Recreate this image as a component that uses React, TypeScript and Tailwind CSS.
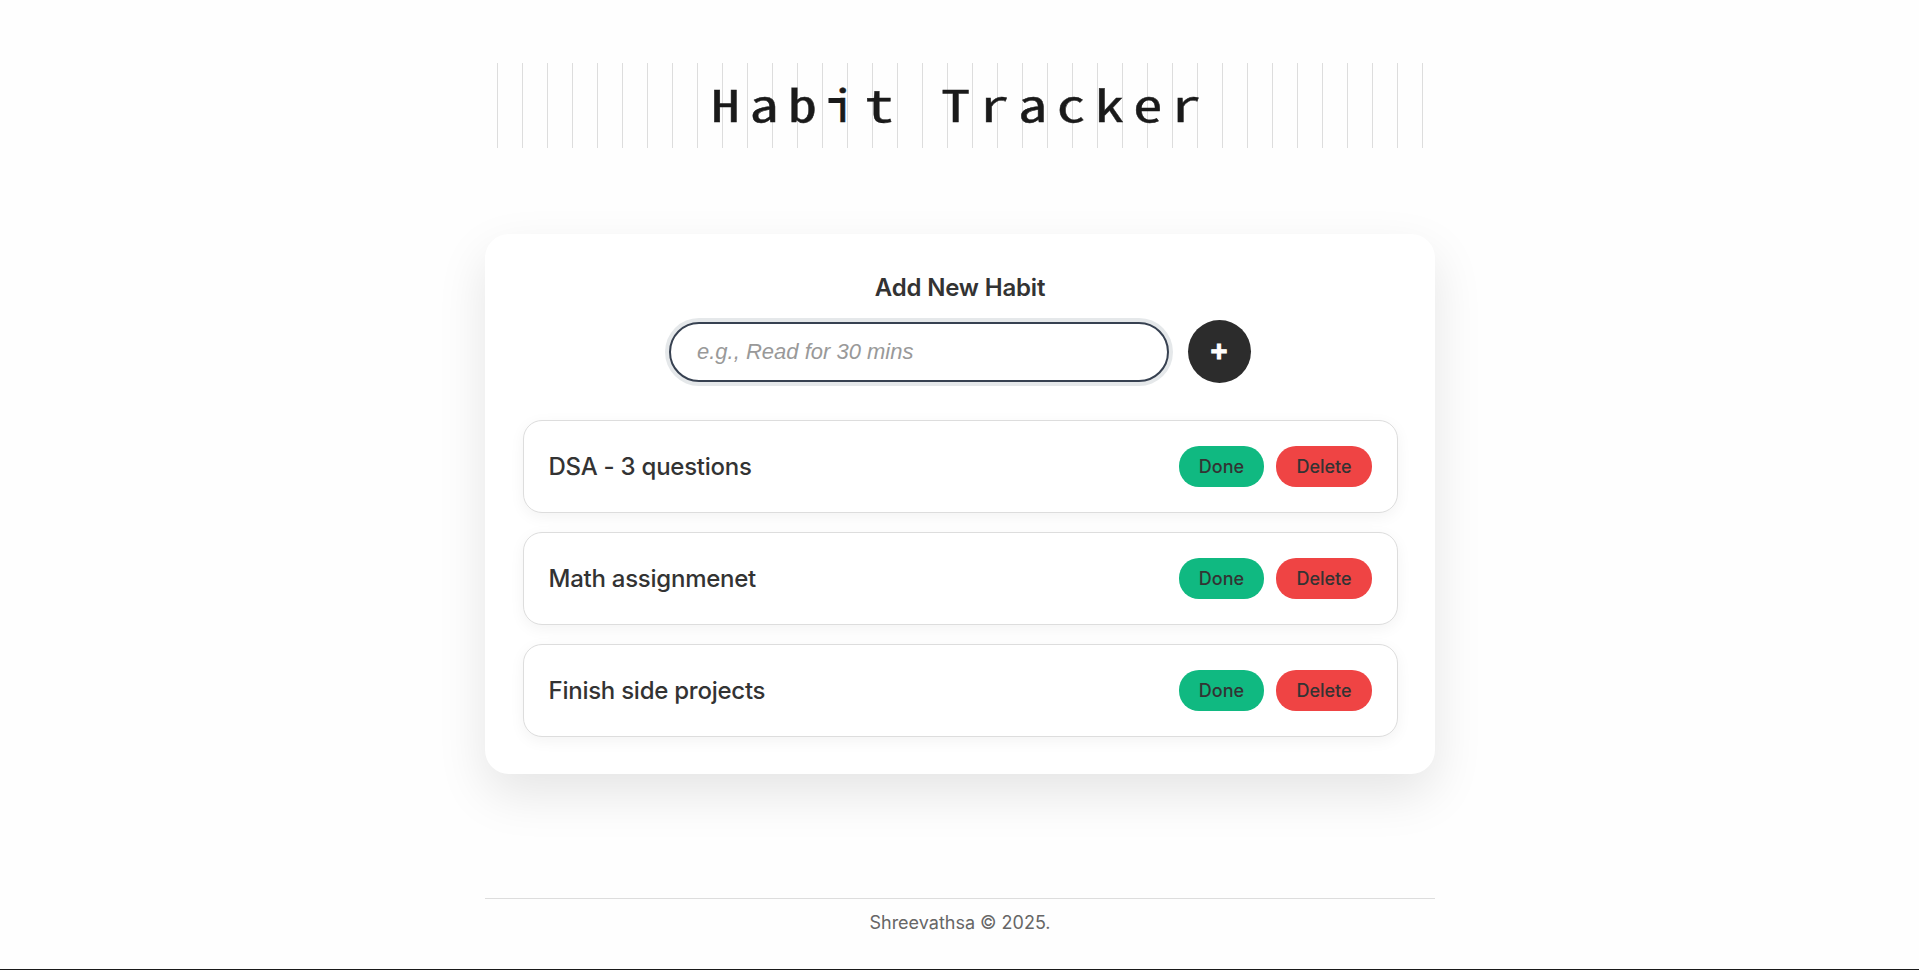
const habits = ["DSA - 3 questions", "Math assignmenet", "Finish side projects"];

const titleLetter = (letter: string) => {
  if (letter === "i") {
    return (
      <span className="relative inline-block translate-x-px scale-x-[0.82] before:absolute before:right-1/2 before:top-[35px] before:h-[4.5px] before:w-[13px] before:bg-[#1a1a1a] before:content-['']">
        i
      </span>
    );
  }
  return letter;
};

export default function App() {
  return (
    <div className="flex h-[970px] flex-col overflow-hidden border-b border-[#1a1a1a] bg-[#fefefe] pl-[485px] pt-[63px] font-['Inter',sans-serif] text-[#333333]">
      <header className="ml-3 h-[85px] w-[926px] bg-[repeating-linear-gradient(90deg,#dddddd_0px,#dddddd_1px,transparent_1px,transparent_25px)]">
        <h1 className="ml-[214px] flex w-[369px] origin-left scale-x-[1.33] items-baseline font-['Noto_Sans_Mono_CJK_JP','Noto_Sans_CJK_JP',monospace] font-normal leading-[80px] text-[#1a1a1a] [-webkit-text-stroke:0.4px_#1a1a1a]">
          {"Habit Tracker".split("").map((letter, index) => (
            <span
              key={index}
              className={
                letter === "H" || letter === "T"
                  ? "w-[28.87px] shrink-0 text-[43.3px]"
                  : "w-[28.87px] shrink-0 text-[44px] whitespace-pre"
              }
            >
              {titleLetter(letter)}
            </span>
          ))}
        </h1>
      </header>

      <main className="mt-[86px] flex h-[540px] w-[950px] shrink-0 flex-col rounded-3xl bg-white pl-[38px] pr-[37px] pt-[39px] shadow-[0_20px_50px_rgba(0,0,0,0.1)]">
        <h2 className="pr-px text-center text-2xl font-semibold leading-[30px] tracking-[-0.17px]">Add New Habit</h2>
        <form className="mt-[17px] flex h-[63px] items-center gap-[19px] pl-[146px]">
          <input
            type="text"
            placeholder="e.g., Read for 30 mins"
            className="h-[60px] w-[500px] rounded-full border-2 border-[#374151] bg-white px-[26px] font-['Liberation_Sans',sans-serif] text-[22px] outline-none ring-4 ring-[#e5e8ea] placeholder:text-[#999999] placeholder:italic"
          />
          <button
            type="button"
            className="size-[63px] rounded-full bg-[#2c2c2c] pb-px pr-px font-['Liberation_Sans',sans-serif] text-[29px] font-bold leading-none text-white [-webkit-text-stroke:1px_#ffffff]"
          >
            +
          </button>
        </form>
        <ul className="mt-[37px] flex flex-col gap-[19px]">
          {habits.map((habit) => (
            <li
              key={habit}
              className="flex h-[93px] items-center justify-between rounded-[19px] border border-[#dddddd] bg-white pl-[24.5px] pr-[25px] shadow-[0_4px_15px_rgba(0,0,0,0.05)]"
            >
              <span className="text-2xl font-medium tracking-[-0.25px]">{habit}</span>
              <div className="flex gap-3">
                <button type="button" className="h-[41px] w-[85px] rounded-[20px] bg-[#10b981] text-lg font-medium">
                  Done
                </button>
                <button type="button" className="h-[41px] w-[96px] rounded-[20px] bg-[#ef4444] text-lg font-medium">
                  Delete
                </button>
              </div>
            </li>
          ))}
        </ul>
      </main>

      <footer className="mt-[124px] w-[950px] border-t border-[#dddddd] pt-[10px] text-center text-lg leading-[27px] text-[#666666]">
        Shreevathsa © 2025.
      </footer>
    </div>
  );
}
